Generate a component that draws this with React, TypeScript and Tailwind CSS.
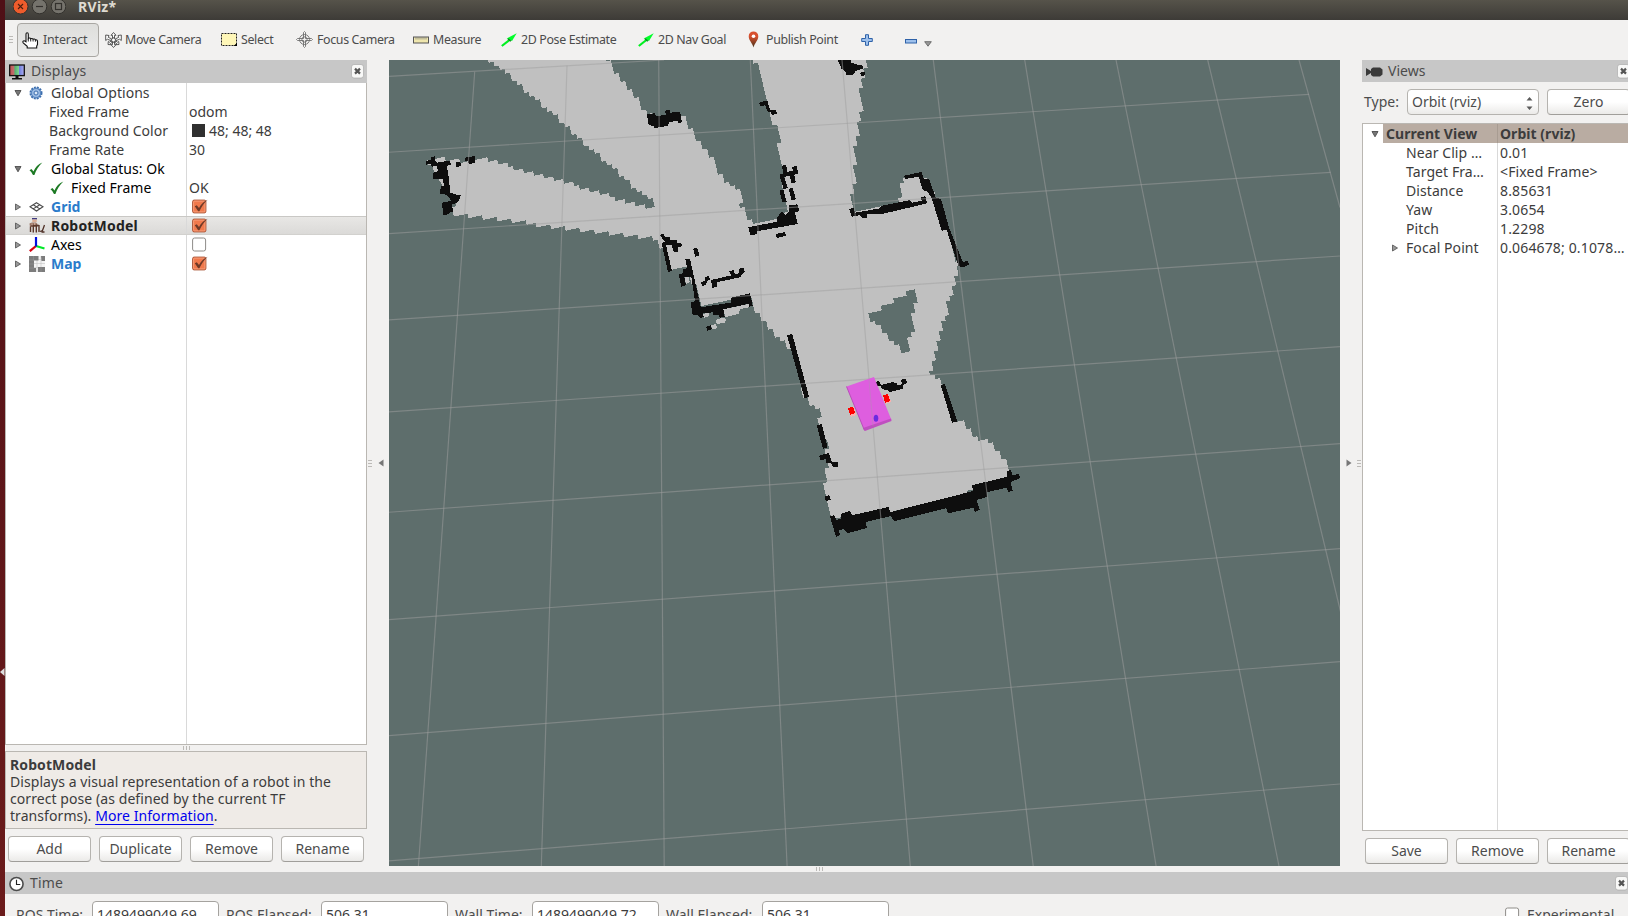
import React from "react";

type Pt = [number, number];

/* ---------- occupancy map ---------- */

// Converts a flat list of thirds-of-a-pixel offsets from (ox, oy) to points.
const at = (ox: number, oy: number, flat: number[]): Pt[] => {
  const out: Pt[] = [];
  for (let i = 0; i < flat.length; i += 2) out.push([ox + flat[i] / 3, oy + flat[i + 1] / 3]);
  return out;
};

const free: Pt[][] = [
  at(388, 60, [120, 305, 145, 290, 200, 305, 285, 290, 370, 322, 480, 350, 560, 375, 650, 403, 720, 428, 790, 447, 815, 455, 860, 460, 860, 545, 810, 537, 740, 528, 650, 518, 570, 510, 500, 503, 420, 488, 330, 478, 270, 468, 200, 468, 195, 420, 165, 375, 150, 340]),
  at(388, 60, [290, -12, 350, 35, 420, 98, 500, 165, 545, 208, 590, 250, 640, 292, 690, 337, 730, 375, 790, 420, 812, 438, 815, 560, 1060, 560, 1060, 400, 1020, 375, 975, 320, 940, 260, 903, 195, 888, 170, 778, 165, 740, 105, 700, 60, 650, -12]),
  at(640, 60, [50, 460, 10, 300, 170, 240, 187, 260, 213, 290, 225, 320, 248, 355, 268, 385, 288, 420, 314, 455, 337, 497, 430, 480, 442, 440, 432, 370, 425, 315, 416, 270, 420, 240, 408, 205, 392, 175, 385, 140, 372, 90, 360, 40, 337, -10, 675, -10, 675, 45, 660, 95, 664, 150, 655, 185, 657, 220, 645, 260, 650, 290, 641, 325, 644, 370, 635, 400, 640, 455, 780, 425, 786, 370, 800, 350, 845, 345, 890, 420, 958, 620, 947, 660, 935, 700, 917, 740, 920, 770, 900, 810, 885, 890, 470, 890, 440, 855, 405, 815, 370, 785, 345, 750, 330, 712, 180, 745, 150, 625, 92, 630, 62, 525]),
  at(760, 300, [0, 10, 0, 62, 25, 75, 50, 105, 80, 133, 100, 125, 135, 290, 155, 315, 175, 325, 180, 370, 200, 440, 207, 500, 193, 520, 198, 570, 203, 620, 215, 660, 400, 640, 760, 540, 750, 500, 715, 455, 683, 423, 643, 410, 608, 362, 585, 365, 550, 255, 530, 232, 513, 222, 515, 195, 527, 150, 550, 70, 555, 40, 572, -10]),
];

// Fragments too small for the cell raster.
const freeBits: Pt[][] = [
  at(640, 60, [188, 762, 206, 758, 207, 768, 192, 773]),
  at(640, 60, [250, 748, 326, 732, 326, 742, 300, 747, 296, 762, 256, 771]),
  at(640, 60, [228, 779, 250, 773, 258, 778, 255, 788, 230, 792]),
  at(640, 60, [212, 796, 228, 792, 231, 804, 218, 809]),
  at(388, 60, [145, 298, 168, 294, 172, 304, 147, 308]),
  at(388, 60, [151, 359, 162, 356, 167, 364, 160, 368]),
  at(640, 60, [84, 560, 95, 558, 102, 578, 116, 578, 110, 600, 92, 620]),
  at(640, 60, [134, 652, 146, 650, 149, 666, 138, 673]),
];

const unknown: Pt[][] = [
  at(640, 60, [676, 773, 710, 750, 745, 730, 785, 703, 828, 692, 828, 712, 818, 760, 811, 780, 819, 815, 808, 835, 806, 882, 792, 882, 770, 852, 745, 835, 730, 808, 710, 788]),
];

const inside = (p: Pt, poly: Pt[]) => {
  let hit = false;
  for (let i = 0, j = poly.length - 1; i < poly.length; j = i++) {
    const [xi, yi] = poly[i];
    const [xj, yj] = poly[j];
    if (yi > p[1] !== yj > p[1] && p[0] < ((xj - xi) * (p[1] - yi)) / (yj - yi) + xi) hit = !hit;
  }
  return hit;
};

// Free space is drawn cell by cell, along the axes of the map.
const U: Pt = [4.5, -0.95];
const V: Pt = [1.05, 4.5];
const cellCorner = (i: number, j: number): Pt => [389 + i * U[0] + j * V[0], 60 + i * U[1] + j * V[1]];

const freePath = (() => {
  const parts: string[] = [];
  const f = (p: Pt) => `${p[0].toFixed(1)} ${p[1].toFixed(1)}`;
  for (let j = -5; j < 150; j++) {
    let start: number | null = null;
    for (let i = -40; i < 160; i++) {
      const c = cellCorner(i + 0.5, j + 0.5);
      const on = free.some((g) => inside(c, g)) && !unknown.some((g) => inside(c, g));
      if (on && start === null) start = i;
      if (!on && start !== null) {
        parts.push(`M${f(cellCorner(start, j))}L${f(cellCorner(i, j))}L${f(cellCorner(i, j + 1.06))}L${f(cellCorner(start, j + 1.06))}Z`);
        start = null;
      }
    }
  }
  return parts.join("");
})();

const occupied: Pt[][] = [
  // far left end
  at(388, 60, [115, 303, 128, 300, 128, 291, 140, 289, 143, 305, 187, 303, 188, 314, 176, 318, 182, 350, 187, 398, 205, 404, 218, 404, 217, 415, 205, 430, 192, 432, 195, 456, 183, 458, 182, 463, 166, 465, 162, 428, 190, 422, 176, 404, 156, 402, 158, 380, 168, 376, 164, 356, 136, 358, 135, 338, 150, 334, 146, 318, 132, 320, 128, 312, 115, 314]),
  at(388, 60, [203, 307, 217, 305, 219, 318, 205, 321]),
  at(388, 60, [231, 293, 260, 288, 261, 308, 243, 313, 240, 302, 232, 302]),
  // second beam block
  at(388, 60, [777, 163, 800, 160, 805, 168, 833, 165, 832, 152, 845, 150, 847, 158, 876, 155, 882, 187, 871, 189, 868, 182, 845, 186, 838, 198, 800, 204, 796, 197, 782, 196]),
  // room at the left
  at(640, 60, [58, 525, 70, 522, 76, 532, 90, 532, 92, 541, 110, 540, 113, 550, 124, 548, 126, 559, 113, 562, 114, 575, 100, 578, 96, 556, 78, 556, 96, 632, 84, 636, 65, 550, 76, 545]),
  at(640, 60, [160, 566, 172, 564, 178, 586, 165, 590]),
  at(640, 60, [136, 598, 150, 596, 182, 742, 272, 728, 273, 713, 330, 700, 338, 738, 326, 740, 322, 732, 250, 748, 254, 771, 240, 773, 235, 765, 220, 765, 218, 757, 190, 760, 191, 770, 180, 775, 174, 765, 158, 766, 152, 728, 165, 724, 154, 650, 133, 652, 138, 675, 124, 680, 116, 642, 130, 640, 128, 628, 142, 625]),
  at(640, 60, [198, 800, 212, 796, 216, 807, 202, 813]),
  at(640, 60, [213, 660, 275, 646, 267, 634, 280, 630, 285, 642, 298, 640, 296, 626, 311, 624, 314, 634, 300, 652, 230, 667, 231, 680, 217, 684]),
  at(640, 60, [195, 652, 207, 648, 210, 658, 200, 664, 199, 674, 186, 678, 183, 667, 196, 662]),
  // doorway posts
  at(640, 60, [325, 502, 410, 485, 410, 473, 425, 455, 436, 466, 448, 455, 446, 436, 472, 433, 478, 452, 465, 458, 473, 492, 350, 514, 352, 523, 331, 525]),
  at(640, 60, [408, 522, 435, 516, 438, 527, 410, 534]),
  at(640, 60, [426, 317, 438, 314, 442, 335, 460, 333, 456, 321, 470, 318, 475, 340, 463, 345, 467, 367, 455, 370, 449, 348, 432, 350, 443, 384, 431, 388, 418, 344, 430, 340]),
  at(640, 60, [418, 392, 430, 389, 440, 425, 427, 427]),
  at(640, 60, [446, 386, 458, 384, 468, 418, 455, 421]),
  at(640, 60, [357, 128, 382, 121, 390, 150, 408, 150, 411, 162, 395, 165, 394, 157, 383, 155, 376, 136, 360, 138]),
  // top of the corridor
  at(640, 60, [590, -5, 630, -5, 634, 8, 652, 14, 666, 16, 670, 25, 645, 34, 643, 43, 620, 46, 616, 33, 605, 27, 600, 15]),
  at(640, 60, [660, 38, 674, 36, 677, 46, 663, 48]),
  // right room
  at(640, 60, [628, 447, 640, 444, 646, 458, 720, 445, 722, 438, 810, 420, 815, 428, 845, 422, 842, 412, 856, 409, 862, 430, 735, 460, 724, 462, 680, 462, 680, 474, 668, 475, 660, 465, 635, 470]),
  at(640, 60, [792, 347, 845, 336, 852, 358, 867, 357, 888, 415, 903, 416, 926, 500, 968, 605, 984, 604, 987, 614, 968, 622, 956, 619, 920, 510, 905, 512, 875, 415, 862, 394, 848, 390, 836, 350, 795, 357]),
  // corridor walls
  at(760, 300, [81, 106, 97, 102, 147, 290, 134, 296]),
  at(760, 300, [170, 375, 185, 373, 203, 442, 189, 447]),
  at(760, 300, [177, 467, 207, 459, 216, 486, 233, 486, 234, 500, 220, 502, 214, 490, 199, 488, 197, 478, 182, 480]),
  at(760, 300, [194, 589, 208, 585, 212, 599, 197, 603]),
  at(760, 300, [542, 255, 555, 252, 592, 364, 576, 368]),
  at(760, 300, [345, 247, 356, 242, 363, 255, 395, 247, 410, 248, 413, 257, 428, 252, 422, 240, 436, 236, 442, 248, 430, 254, 429, 266, 410, 271, 388, 277, 384, 270, 366, 268, 362, 258, 350, 258]),
  // bottom wall
  at(760, 300, [210, 650, 222, 645, 230, 660, 243, 656, 243, 641, 270, 633, 276, 646, 385, 621, 392, 636, 640, 573, 636, 556, 742, 530, 740, 514, 753, 510, 758, 526, 776, 522, 780, 534, 752, 546, 758, 572, 744, 576, 740, 563, 680, 577, 681, 591, 650, 600, 659, 630, 645, 635, 640, 623, 565, 640, 558, 625, 402, 664, 392, 648, 318, 666, 320, 684, 262, 700, 250, 688, 236, 690, 240, 706, 228, 710]),
];

const gridLines: [number, number, number, number][] = [
  [474.7, 71.7, 418.4, 866],
  [567, 65.7, 541.3, 866],
  [658.7, 60, 664.2, 866],
  [750.3, 60, 787.1, 866],
  [842, 60, 910.3, 866],
  [933.3, 60, 1033.2, 866],
  [1024.7, 60, 1156.1, 866],
  [1116, 60, 1279, 866],
  [1207.7, 60, 1401.8, 866],
  [1299, 60, 1340, 207.5],
  [388, 76.5, 664, 60],
  [388, 152.3, 1309, 94.3],
  [388, 233.7, 1330.7, 172.3],
  [388, 320, 1340, 256],
  [388, 412, 1340, 346.7],
  [388, 512.3, 1340, 443.7],
  [388, 619.7, 1340, 548.7],
  [388, 735.7, 1340, 661.7],
  [388, 861, 1340, 784],
];

const pts = (p: Pt[]) => p.map((q) => `${q[0].toFixed(1)},${q[1].toFixed(1)}`).join(" ");

const Scene = () => (
  <svg viewBox="389 60 951 806" width="951" height="806" className="block shrink-0 bg-[#5e6e6c]">
    <path d={freePath} fill="#c0c0c0" shapeRendering="crispEdges" />
    <g fill="#0e0e0e" shapeRendering="crispEdges">
      {occupied.map((p, i) => (
        <polygon key={i} points={pts(p)} />
      ))}
    </g>
    <g fill="#c0c0c0" shapeRendering="crispEdges">
      {freeBits.map((p, i) => (
        <polygon key={i} points={pts(p)} />
      ))}
    </g>
    <g stroke="#a0a0a0" strokeOpacity="0.5" strokeWidth="1.2">
      {gridLines.map(([a, b, c, d], i) => (
        <line key={i} x1={a} y1={b} x2={c} y2={d} />
      ))}
    </g>
    <g shapeRendering="crispEdges">
      <polygon points="848,409 854,407 856,415 851,417" fill="#f9b0ae" />
      <polygon points="848,408 853,406.500 855,413 850,415" fill="#ff0000" />
      <polygon points="883,396 889,394.500 891,402 886,404" fill="#f9b0ae" />
      <polygon points="883,395.500 888,394 890,401 885,403" fill="#ff0000" />
    </g>
    <polygon points="846.500,386.500 874,377 891.500,420 864,429.500" fill="#de5edf" />
    <polygon points="864,429.500 863,428 891,418.500 891.500,421 865,431" fill="#bf4fc0" />
    <line x1="846.500" y1="386.500" x2="864.500" y2="430.500" stroke="#b84fb9" strokeWidth="1" />
    <ellipse cx="876" cy="418.300" rx="2.300" ry="3.500" fill="#6a2be0" />
    <line x1="869" y1="380" x2="873" y2="426" stroke="#a0a0a0" strokeOpacity="0.35" />
  </svg>
);

/* ---------- small parts ---------- */

const Arrow = ({ open }: { open?: boolean }) => (
  <svg width="8" height="8" viewBox="0 0 8 8" className="shrink-0">
    {open ? (
      <path d="M1 1.500h6L4 6.800z" fill="#777" stroke="#4c4c4c" strokeWidth=".9" />
    ) : (
      <path d="M1.500 1v6L6.500 4z" fill="#999" stroke="#5c5c5c" strokeWidth=".9" />
    )}
  </svg>
);

const Tick = () => (
  <svg width="14" height="14" viewBox="0 0 14 14">
    <path d="M.5 8.200l2-1.200 2 2.600C6.300 5.500 9 2.200 13.400.6 9.700 4 7 8.500 5.400 13H4C3 11 2 9.400.5 8.200z" fill="#1d7a24" />
  </svg>
);

const Check = ({ on }: { on?: boolean }) =>
  on ? (
    <svg width="16" height="16" viewBox="0 0 16 16">
      <rect x=".6" y="1.100" width="13.300" height="12.800" rx="1.500" fill="#f0794c" stroke="#a9573a" />
      <rect x="1.600" y="2.100" width="11.300" height="10.800" rx="1" fill="none" stroke="#f9a684" strokeWidth=".8" />
      <path d="M2.800 7.300l2-1 2.200 2.600C8.800 5.700 11.500 2.500 15.700.7 12.500 3.500 9.500 7.500 7.400 12.300H6.200z" fill="#6e3a28" />
    </svg>
  ) : (
    <svg width="16" height="16" viewBox="0 0 16 16">
      <rect x=".6" y="1" width="13" height="13" rx="2" fill="#fff" stroke="#8e8c88" />
    </svg>
  );

const GearIcon = () => (
  <svg width="14" height="14" viewBox="0 0 14 14">
    <circle cx="7" cy="7" r="5.500" fill="#8fb4e0" stroke="#3d6eae" strokeWidth="2" strokeDasharray="1.900 1" />
    <circle cx="7" cy="7" r="4.500" fill="#9cbce4" stroke="#4677b5" strokeWidth=".7" />
    <circle cx="7" cy="7" r="2" fill="#dbe8f7" stroke="#3d6eae" />
  </svg>
);

const GridIcon = () => (
  <svg width="15" height="10" viewBox="0 0 15 10" fill="none" stroke="#4a4a4a" strokeWidth="1.100">
    <path d="M7.500.7l6.500 4.100-6.500 4.200L1 4.800zM4.200 2.700l6.600 4.200M10.800 2.700L4.200 6.900" />
  </svg>
);

const RobotIcon = () => (
  <svg width="16" height="15" viewBox="0 0 16 15">
    <rect x="3" y="0" width="5" height="1.500" fill="#3e3a80" />
    <rect x="3.300" y="1.500" width="4.400" height="2.500" fill="#dcae96" />
    <path d="M.5 5.500L3 4.500h4l1.500 1.500V9H1z" fill="#9a7464" />
    <path d="M1.500 8.500V14M4.300 7v7.500M7.300 6.500v8M10 7v7M2 7.500h8" stroke="#5b382c" strokeWidth="1.400" fill="none" />
    <path d="M11 13.500l2.500-1 2-5.500M12.500 14h3" stroke="#4e2f25" strokeWidth="1.300" fill="none" />
    <path d="M3 5.500v2M5.800 5v2" stroke="#e6c3b0" strokeWidth=".9" />
  </svg>
);

const AxesIcon = () => (
  <svg width="16" height="15" viewBox="0 0 16 15" strokeWidth="2.200">
    <path d="M7 9L.8 14.200" stroke="#d90010" />
    <path d="M7 9l8.500 2.500" stroke="#00e828" />
    <path d="M7 0v9.500" stroke="#0010e0" />
  </svg>
);

const MapIcon = () => (
  <svg width="16" height="16" viewBox="0 0 16 16">
    <rect width="16" height="16" fill="#f4f4f4" />
    <path d="M4 3.500h12M5 7.500h11M5 11.500h11M8 0v16M12 0v16" stroke="#c5c5c5" strokeWidth=".6" />
    <path d="M0 0h9.500v4.500H5V16H0zM12 0h4v5h-3.500zM9 11h7v5H9zM5 12h2v4H5z" fill="#7c7c7c" />
    <path d="M0 4h5M0 8h5M0 12h5M4.500 0v5M12 11v5" stroke="#949494" strokeWidth=".6" />
  </svg>
);

const CloseBox = () => (
  <svg width="13" height="15" viewBox="0 0 13 15" className="shrink-0">
    <rect x=".5" y=".5" width="12" height="13.500" rx="2.500" fill="#f8f8f7" stroke="#a2a2a2" strokeWidth=".6" />
    <path d="M4 4.600l5 5M9 4.600L4 9.600" stroke="#555" strokeWidth="2.200" />
  </svg>
);

const Button = ({ children, className = "w-[83px]" }: { children: React.ReactNode; className?: string }) => (
  <button
    className={`${className} flex h-[26px] shrink-0 items-center justify-center rounded-[4px] border border-[#b5b3af] border-b-[#a09e9a] bg-linear-to-b from-white from-50% to-[#ebeae8] text-[#4c4c4c]`}
  >
    {children}
  </button>
);

const DotsV = () => (
  <div className="flex flex-col gap-[2px]">
    <i className="h-px w-[4px] bg-[#bcbab7]" />
    <i className="h-px w-[4px] bg-[#bcbab7]" />
    <i className="h-px w-[4px] bg-[#bcbab7]" />
  </div>
);

const DotsH = () => (
  <div className="flex gap-[2px]">
    <i className="h-[4px] w-px bg-[#bcbab7]" />
    <i className="h-[4px] w-px bg-[#bcbab7]" />
    <i className="h-[4px] w-px bg-[#bcbab7]" />
  </div>
);

/* ---------- toolbar ---------- */

const HandIcon = () => (
  <svg width="17" height="17" viewBox="0 0 17 17">
    <path
      d="M4 9.800V2.200C4 .3 6.300.3 6.300 2.200v4.300c.6-.8 2-.6 2.400.3.700-.6 2-.4 2.400.5.700-.5 2-.3 2.300.6 1-.3 2.100.2 2.100 1.300v3.300l-.8 1.700v1.800H5.200v-1.700L1.200 10.800C.3 9.500 1.500 8.300 2.800 9z"
      fill="#fff"
      stroke="#111"
      strokeWidth="1.100"
    />
    <path d="M6.300 6.500v3M8.700 7v2.500M11.100 7.500v2M13.400 8v1.700" stroke="#111" strokeWidth=".9" />
  </svg>
);

const MoveIcon = () => (
  <svg width="17" height="16" viewBox="0 0 17 16" fill="#fff" stroke="#4a4a4a" strokeWidth=".9">
    <path d="M8.500.5l2.500 2.800H9.500V6h-2V3.300H6zM8.500 15.500L6 12.700h1.500V10h2v2.700H11zM.7 3v5.500l1.700-1.300 3.400 1.400.7-1.800-3.200-1.400L4 3.500zM16.300 3v5.500l-1.700-1.300-3.400 1.400-.7-1.800 3.200-1.400L13 3.500zM3 12.500l.3-3 1 .8 2-1.300.9 1.300-2 1.400.8 1zM14 12.500l-.3-3-1 .8-2-1.300-.9 1.300 2 1.400-.8 1z" />
    <circle cx="8.500" cy="8" r="2" />
  </svg>
);

const SelectIcon = () => (
  <svg width="16" height="13" viewBox="0 0 16 13">
    <rect x=".5" y=".5" width="15" height="12" fill="#fff7b8" stroke="#222" strokeDasharray="2 1" />
    <path d="M16 10v3h-3.500z" fill="#000" />
  </svg>
);

const FocusIcon = () => (
  <svg width="17" height="17" viewBox="0 0 17 17" fill="none" stroke="#6e6e6e" strokeWidth=".9">
    <circle cx="8.500" cy="8.500" r="5" />
    <circle cx="8.500" cy="8.500" r="2.600" />
    <path d="M7.500 7.500V1.500l1-1 1 1v6h6l1 1-1 1h-6v6l-1 1-1-1v-6h-6l-1-1 1-1z" />
  </svg>
);

const RulerIcon = () => (
  <svg width="16" height="8" viewBox="0 0 16 8">
    <rect x=".5" y="1" width="15" height="6" fill="#efe6ae" stroke="#555" />
    <path d="M3 1v2.500M5 1v2.500M7 1v2.500M9 1v2.500M11 1v2.500M13 1v2.500" stroke="#777" strokeWidth=".7" />
  </svg>
);

const PoseIcon = () => (
  <svg width="16" height="14" viewBox="0 0 16 14">
    <path d="M.8 13L9 6.500" stroke="#00f020" strokeWidth="2.200" />
    <path d="M15.700.3L11 8 5.700 5.500z" fill="#00ff2a" />
    <path d="M7 5.800l2.800 2.400" stroke="#0a8a1c" strokeWidth="1.500" />
  </svg>
);

const PinIcon = () => (
  <svg width="11" height="17" viewBox="0 0 11 17">
    <defs>
      <linearGradient id="pin" x1="0" y1="0" x2="0" y2="1">
        <stop offset=".3" stopColor="#d8502f" />
        <stop offset="1" stopColor="#46321a" />
      </linearGradient>
    </defs>
    <path d="M5.500 16.500C4.500 12 .7 9.500.7 5.200a4.800 4.800 0 019.600 0c0 4.300-3.800 6.800-4.800 11.300z" fill="url(#pin)" />
    <circle cx="5.500" cy="5.200" r="1.800" fill="#fff" />
  </svg>
);

const Tool = ({ icon, label, iconW, w }: { icon: React.ReactNode; label: string; iconW: string; w: string }) => (
  <div className={`flex shrink-0 items-center ${w}`}>
    <div className={`flex shrink-0 items-center ${iconW}`}>{icon}</div>
    <span>{label}</span>
  </div>
);

const Toolbar = () => (
  <div className="flex h-10 shrink-0 items-center bg-[#f2f1f0] pb-px pl-1 text-[12.400px] tracking-[-0.350px] whitespace-nowrap text-[#4c4c4c]">
    <DotsV />
    <div className="mt-px ml-1 flex h-[34px] w-[82px] shrink-0 items-center rounded-[4px] border border-[#a9a7a3] bg-linear-to-b from-[#dededc] to-[#ebebea] pl-[4px]">
      <HandIcon />
      <span className="ml-1 tracking-[-0.150px]">Interact</span>
    </div>
    <div className="ml-[6px] flex">
      <Tool icon={<MoveIcon />} label="Move Camera" iconW="w-[20px]" w="w-[116px]" />
      <Tool icon={<SelectIcon />} label="Select" iconW="w-[20px]" w="w-[75px]" />
      <Tool icon={<FocusIcon />} label="Focus Camera" iconW="w-[21px]" w="w-[117px]" />
      <Tool icon={<RulerIcon />} label="Measure" iconW="w-[20px]" w="w-[88px]" />
      <Tool icon={<PoseIcon />} label="2D Pose Estimate" iconW="w-[20px]" w="w-[137px]" />
      <Tool icon={<PoseIcon />} label="2D Nav Goal" iconW="w-[20px]" w="w-[110px]" />
      <Tool icon={<PinIcon />} label="Publish Point" iconW="w-[18px]" w="w-[113px]" />
    </div>
    <svg width="12" height="12" viewBox="0 0 12 12" className="mt-px shrink-0">
      <path d="M4.500.7h3v3.800h3.800v3H7.500v3.800h-3V7.500H.7v-3h3.800z" fill="#9dc0ec" stroke="#2f62a8" />
    </svg>
    <svg width="12" height="5" viewBox="0 0 12 5" className="mt-[3px] ml-[32px] shrink-0">
      <rect x=".5" y=".5" width="11" height="3.500" fill="#9dc0ec" stroke="#2f62a8" />
    </svg>
    <svg width="8" height="6" viewBox="0 0 8 6" className="mt-[8px] ml-[7px] shrink-0">
      <path d="M.7.7h6.600L4 5.200z" fill="#999" stroke="#666" strokeWidth=".9" />
    </svg>
  </div>
);

/* ---------- panels ---------- */

type Row = {
  label: string;
  value?: React.ReactNode;
  icon?: React.ReactNode;
  open?: boolean;
  arrow?: boolean;
  indent?: string;
  tone?: string;
  selected?: boolean;
};

const link = "font-bold text-[#2a7ccb]";

const displays: Row[] = [
  { label: "Global Options", icon: <GearIcon />, arrow: true, open: true },
  { label: "Fixed Frame", value: "odom", indent: "pl-[43px]" },
  {
    label: "Background Color",
    value: (
      <>
        <i className="mr-[4px] size-[13px] bg-[#303030]" />
        48; 48; 48
      </>
    ),
    indent: "pl-[43px]",
  },
  { label: "Frame Rate", value: "30", indent: "pl-[43px]" },
  { label: "Global Status: Ok", icon: <Tick />, arrow: true, open: true, tone: "text-black tracking-[0.060px]" },
  { label: "Fixed Frame", value: "OK", icon: <Tick />, indent: "pl-[44px]", tone: "text-black tracking-[0.060px]" },
  { label: "Grid", icon: <GridIcon />, arrow: true, value: <Check on />, tone: link },
  { label: "RobotModel", icon: <RobotIcon />, arrow: true, value: <Check on />, tone: "font-bold tracking-[0.200px] text-[#222]", selected: true },
  { label: "Axes", icon: <AxesIcon />, arrow: true, value: <Check />, tone: "text-black" },
  { label: "Map", icon: <MapIcon />, arrow: true, value: <Check on />, tone: link },
];

const DisplaysPanel = () => (
  <div className="flex w-[362px] shrink-0 flex-col">
    <div className="flex h-[23px] shrink-0 items-center bg-[#c7c7c7] pr-[3px] pb-px pl-1 text-[#4c4c4c]">
      <svg width="16" height="16" viewBox="0 0 16 16" className="mt-px">
        <defs>
          <linearGradient id="screen">
            <stop offset="0" stopColor="#c05050" />
            <stop offset=".3" stopColor="#c07070" />
            <stop offset=".35" stopColor="#50b070" />
            <stop offset=".62" stopColor="#80d090" />
            <stop offset=".66" stopColor="#7080e0" />
            <stop offset="1" stopColor="#b0b0f0" />
          </linearGradient>
        </defs>
        <rect x=".7" y="1" width="14.600" height="10.600" fill="url(#screen)" stroke="#111" strokeWidth="1.300" />
        <path d="M6.500 12h3v2h-3zM3 14h10v1.500H3z" fill="#111" />
      </svg>
      <span className="ml-[6px] flex-1 tracking-[0.100px]">Displays</span>
      <CloseBox />
    </div>
    <div className="flex h-[662px] shrink-0 flex-col border border-t-0 border-[#bab7b2] bg-white">
      {displays.map((r, i) => (
        <div
          key={i}
          className={`flex h-[19px] shrink-0 ${r.selected ? "border-y border-t-[#c9c8c5] border-b-[#d2d1ce] bg-linear-to-b from-[#e8e7e5] to-[#dbdad8]" : ""}`}
        >
          <div className={`flex w-[181px] items-center border-r border-[#d9d9d9] ${r.indent ?? "pl-[8px]"}`}>
            {r.arrow && (
              <span className="w-[15px]">
                <Arrow open={r.open} />
              </span>
            )}
            {r.icon && <span className={r.arrow ? "flex w-[22px]" : "flex w-[21px]"}>{r.icon}</span>}
            <span className={`whitespace-nowrap ${r.tone ?? "tracking-[0.040px] text-[#3c3c3c]"}`}>{r.label}</span>
          </div>
          <div className={`flex flex-1 items-center text-[#3c3c3c] ${typeof r.value === "string" ? "pl-[2px]" : "pl-[5px]"}`}>{r.value}</div>
        </div>
      ))}
      <div className="w-[181px] flex-1 border-r border-[#d9d9d9]" />
    </div>
    <div className="flex h-[6px] shrink-0 items-center justify-center">
      <DotsH />
    </div>
    <div className="h-[78px] shrink-0 border border-[#bab7b2] bg-[#efebe7] pt-[4px] pl-[4px] leading-[17px] tracking-[0.070px] whitespace-nowrap text-[#3c3c3c]">
      <p className="font-bold tracking-[0.100px]">RobotModel</p>
      <p>Displays a visual representation of a robot in the</p>
      <p>correct pose (as defined by the current TF</p>
      <p>
        transforms). <a className="text-[#0000ee] underline underline-offset-3">More Information</a>.
      </p>
    </div>
    <div className="flex gap-2 pt-[7px] pl-[3px]">
      <Button>Add</Button>
      <Button>Duplicate</Button>
      <Button>Remove</Button>
      <Button>Rename</Button>
    </div>
  </div>
);

const views: Row[] = [
  { label: "Near Clip …", value: "0.01" },
  { label: "Target Fra…", value: "<Fixed Frame>" },
  { label: "Distance", value: "8.85631" },
  { label: "Yaw", value: "3.0654" },
  { label: "Pitch", value: "1.2298" },
  { label: "Focal Point", value: "0.064678; 0.1078…", arrow: true },
];

const ViewsPanel = () => (
  <div className="flex w-[270px] shrink-0 flex-col whitespace-nowrap">
    <div className="flex h-[22px] shrink-0 items-center bg-[#c7c7c7] pl-1 text-[#4c4c4c]">
      <svg width="17" height="10" viewBox="0 0 17 10" className="mt-px">
        <path d="M0 1l5 3V2l2-1.500h7L16.500 2.500v5L14 9.500H7L5 8V6L0 9z" fill="#3a3a3a" />
      </svg>
      <span className="ml-[5px] w-[229px]">Views</span>
      <CloseBox />
    </div>
    <div className="flex h-[41px] shrink-0 items-center pb-[2px] pl-[2px] text-[#4c4c4c]">
      <span className="w-[43px]">Type:</span>
      <div className="flex h-[26px] w-[132px] shrink-0 items-center justify-between rounded-[4px] border border-[#b5b3af] bg-linear-to-b from-white from-50% to-[#ebeae8] pr-[5px] pl-[4px]">
        Orbit (rviz)
        <svg width="7" height="13" viewBox="0 0 7 13" className="mt-1">
          <path d="M.5 3.500L3.500 0l3 3.500zM.5 9.500L3.500 13l3-3.500z" fill="#5a5a5a" />
        </svg>
      </div>
      <Button className="ml-2 w-[83px]">Zero</Button>
    </div>
    <div className="flex h-[708px] shrink-0 flex-col border border-r-0 border-[#bab7b2] bg-white text-[#3c3c3c]">
      <div className="flex h-[19px] shrink-0 font-bold tracking-[0.040px]">
        <span className="flex w-5 shrink-0 items-center pl-[8px]">
          <Arrow open />
        </span>
        <span className="flex w-[115px] shrink-0 items-center border-r border-[#a89c92] bg-[#b9aca2] pl-[3px]">Current View</span>
        <span className="flex flex-1 items-center bg-[#b9aca2] pl-[2px]">Orbit (rviz)</span>
      </div>
      {views.map((r) => (
        <div key={r.label} className="flex h-[19px] shrink-0">
          <div className="flex w-[135px] items-center border-r border-[#d9d9d9] pl-[28px] tracking-[0.080px]">
            <span className="w-[15px]">{r.arrow && <Arrow />}</span>
            {r.label}
          </div>
          <div className="flex flex-1 items-center pl-[2px] tracking-[0.150px]">{r.value}</div>
        </div>
      ))}
      <div className="w-[135px] flex-1 border-r border-[#d9d9d9]" />
    </div>
    <div className="flex gap-2 pt-[7px] pl-[3px]">
      <Button>Save</Button>
      <Button>Remove</Button>
      <Button>Rename</Button>
    </div>
  </div>
);

const Gutter = ({ side }: { side: "left" | "right" }) => (
  <div className="flex w-[22px] shrink-0 items-center justify-center">
    {side === "left" ? (
      <div className="mr-[4px] flex items-center gap-[6px]">
        <DotsV />
        <svg width="6" height="8" viewBox="0 0 6 8">
          <path d="M5.500.5v7L.5 4z" fill="#777" />
        </svg>
      </div>
    ) : (
      <div className="ml-[5px] flex items-center gap-[5px]">
        <svg width="6" height="8" viewBox="0 0 6 8">
          <path d="M.5.5v7l5-3.500z" fill="#777" />
        </svg>
        <DotsV />
      </div>
    )}
  </div>
);

const Field = ({ label, value, w }: { label: string; value: string; w: string }) => (
  <div className="flex items-center">
    <span className={`${w} shrink-0`}>{label}</span>
    <div className="mr-[7px] flex h-[27px] w-[127px] items-center rounded-[4px] border border-[#a5a39f] bg-white pl-[4px] text-[#3c3c3c]">{value}</div>
  </div>
);

const TimePanel = () => (
  <div className="flex h-[50px] shrink-0 flex-col overflow-hidden">
    <div className="flex h-[6px] shrink-0 items-center pl-[811px]">
      <DotsH />
    </div>
    <div className="flex h-[22px] shrink-0 items-center bg-[#c7c7c7] pl-1 text-[#4c4c4c]">
      <svg width="16" height="16" viewBox="0 0 16 16" className="mt-[2px]">
        <circle cx="8" cy="8" r="7" fill="#fff" stroke="#4c4c4c" strokeWidth="1.700" />
        <path d="M8 3.500V8.500h4" fill="none" stroke="#222" strokeWidth="1.200" />
      </svg>
      <span className="ml-[6px] w-[1585px] shrink-0 tracking-[0.200px]">Time</span>
      <CloseBox />
    </div>
    <div className="flex shrink-0 items-center pt-[7px] pl-[11px] whitespace-nowrap text-[#4c4c4c]">
      <Field label="ROS Time:" value="1489499049.69" w="w-[76px]" />
      <Field label="ROS Elapsed:" value="506.31" w="w-[95px]" />
      <Field label="Wall Time:" value="1489499049.72" w="w-[77px]" />
      <Field label="Wall Elapsed:" value="506.31" w="w-[96px]" />
      <span className="ml-[609px] flex shrink-0 items-center">
        <Check />
        <span className="ml-[6px]">Experimental</span>
      </span>
    </div>
  </div>
);

const TitleBar = () => (
  <div className="flex h-5 shrink-0 items-start gap-1 bg-linear-to-b from-[#56534a] to-[#3d3b37] pl-[8px]">
    <svg width="53" height="15" viewBox="0 0 53 15">
      <circle cx="7.500" cy="6.500" r="7.500" fill="#ee5c2c" stroke="#33312d" />
      <path d="M5 4l5 5M10 4L5 9" stroke="#4c2010" strokeWidth="1.100" />
      <circle cx="26.500" cy="6.500" r="7.300" fill="#75736c" stroke="#33312d" />
      <path d="M23 6.500h7" stroke="#33312d" strokeWidth="1.200" />
      <circle cx="45.500" cy="6.500" r="7.300" fill="#75736c" stroke="#33312d" />
      <rect x="42.500" y="3.500" width="6" height="6" fill="none" stroke="#33312d" strokeWidth="1.200" />
    </svg>
    <span className="ml-[8px] text-[14px] leading-[14px] font-bold tracking-[0.300px] text-[#dfdbd2]">RViz*</span>
  </div>
);

export default function App() {
  return (
    <div className="flex h-[916px] w-[1628px] overflow-hidden bg-[#f2f1f0] font-['Noto_Sans',sans-serif] text-[14px] leading-[18px]">
      <div className="flex w-[5px] shrink-0 flex-col bg-linear-to-b from-[#4f1016] to-[#6b1b1b] pt-[668px]">
        <svg width="5" height="8" viewBox="0 0 5 8">
          <path d="M4.500 0v8L0 4z" fill="#ddd" />
        </svg>
      </div>
      <div className="flex w-[1623px] shrink-0 flex-col">
        <TitleBar />
        <Toolbar />
        <div className="flex h-[806px] shrink-0">
          <DisplaysPanel />
          <Gutter side="left" />
          <Scene />
          <Gutter side="right" />
          <ViewsPanel />
        </div>
        <TimePanel />
      </div>
    </div>
  );
}
